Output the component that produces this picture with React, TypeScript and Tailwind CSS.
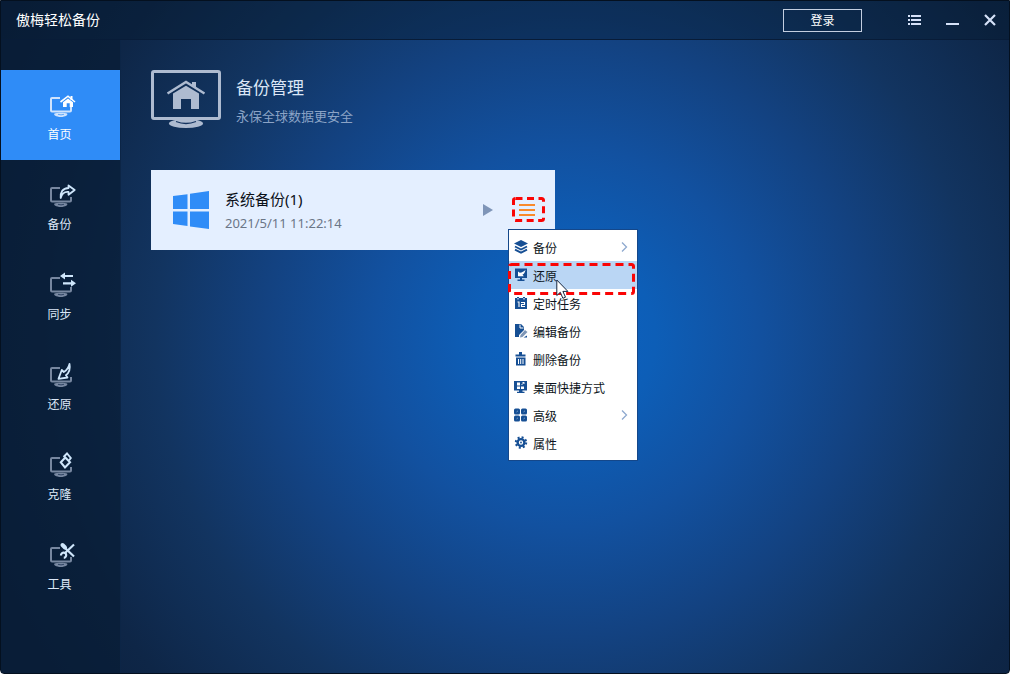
import React from 'react';

function Monitor({ active, children }: { active?: boolean; children: React.ReactNode }) {
  return (
    <svg width="26" height="26" viewBox="0 -2 26 26" fill="none" aria-hidden="true">
      <g className={active ? 'text-[#cfe3fd]' : 'text-[#7787a0]'}>
        <path
          d="M10 4H2a1 1 0 0 0-1 1v11.500a1 1 0 0 0 1 1h18a1 1 0 0 0 1-1V13"
          stroke="currentColor"
          strokeWidth="2"
        />
        <path d="M4.500 19.500c1.500-1 11-1 12.500 0c1.500 1.200-1.500 3.500-6.200 3.500s-7.800-2.300-6.300-3.500z" fill="currentColor" />
        <path d="M8 20.300q3 1.200 6 0" stroke={active ? '#2f8cf7' : '#10284a'} strokeWidth="0.700" />
      </g>
      {children}
    </svg>
  );
}

const navItems = [
  {
    label: '首页',
    glyph: (
      <>
        <path d="M10.500 8L18 2.200L25 8" stroke="#fff" strokeWidth="1.600" />
        <path d="M20.500 2h2v4h-2z" fill="#fff" />
        <path d="M13 13V8.200L18 4.500L23 8.200V13h-3.300V9.300h-3V13z" fill="#fff" />
      </>
    ),
  },
  {
    label: '备份',
    glyph: (
      <path
        d="M18.500 1.500L24.700 6L18.500 10.800V8C14.500 7.500 12 9.500 10.700 14C10.300 8 12.500 4.300 18.500 4z"
        stroke="#cfe6fb"
        strokeWidth="1.800"
        strokeLinejoin="round"
      />
    ),
  },
  {
    label: '同步',
    glyph: (
      <>
        <path d="M23 2H13M13 9.300h9" stroke="#cfe6fb" strokeWidth="2.200" />
        <path d="M10 2L15-1.500v7zM26 9.300L21 5.800v7z" fill="#cfe6fb" />
      </>
    ),
  },
  {
    label: '还原',
    glyph: (
      <path
        d="M19.500 0C18.500 4 16.500 6.500 13.800 8L11.800 6L8.500 14.800L17.500 13.500L15.900 11.200C19.500 8.500 20.500 5 19.500 0z"
        stroke="#cfe6fb"
        strokeWidth="1.800"
        strokeLinejoin="round"
      />
    ),
  },
  {
    label: '克隆',
    glyph: (
      <>
        <path d="M13.500 3L17-.5L20.800 4L19 6.500" stroke="#cfe6fb" strokeWidth="1.900" />
        <path d="M15.300 3.500L20 8.300L15 13.500L10.800 8.300z" stroke="#cfe6fb" strokeWidth="2.100" />
      </>
    ),
  },
  {
    label: '工具',
    glyph: (
      <>
        <path d="M12.500 1L15 3.500" stroke="#cfe6fb" strokeWidth="4" strokeLinecap="round" />
        <path d="M14 3L24 12.500" stroke="#cfe6fb" strokeWidth="2.200" />
        <path d="M24 .5L14.500 9.500" stroke="#cfe6fb" strokeWidth="2.200" />
        <path d="M11 11.500a2.600 2.600 0 1 1 2.800 2.300" stroke="#cfe6fb" strokeWidth="2.200" />
      </>
    ),
  },
];

const menuItems = [
  {
    label: '备份',
    submenu: true,
    icon: (
      <>
        <path d="M7 0L14 3.500L7 7L0 3.500z" fill="#164f94" />
        <path d="M1 6.500L7 9.500L13 6.500M1 9.700L7 12.700L13 9.700" stroke="#164f94" strokeWidth="1.900" />
      </>
    ),
  },
  {
    label: '还原',
    active: true,
    icon: (
      <>
        <path d="M1 .5h12v9.500H1zM6 10h2v1.500h2.500V13h-7v-1.500H6z" fill="#164f94" />
        <path d="M11.500 1.800C11 4.500 10 6 8.500 6.500L9.800 8.300H4L4 3.500L5.800 4.800C8 4.500 10 3.500 11.500 1.800z" fill="#fff" />
      </>
    ),
  },
  {
    label: '定时任务',
    icon: (
      <>
        <path d="M1 2h2V1h2v1h4V1h2v1h2v11H1z" fill="#164f94" />
        <path d="M3.500 6H5v5M7 6.500h3.500v2h-3v2H11M4 2v1.500M10 2v1.500" stroke="#fff" strokeWidth="1.100" />
      </>
    ),
  },
  {
    label: '编辑备份',
    icon: (
      <>
        <path d="M1 0h6l3 3v3L5 11v2H1z" fill="#164f94" />
        <path d="M6 .5V4h3.500" stroke="#fff" />
        <path d="M11 6l2.500 2L8.500 13L6 13.500L6.500 11z" fill="#7e96b6" />
        <path d="M9.500 13.500L13 11.500v2z" fill="#164f94" />
      </>
    ),
  },
  {
    label: '删除备份',
    icon: (
      <>
        <path d="M2 2.500h3V0h3v2.500h3.500v2h-10v-2zM2 5.500h9.500v8H2z" fill="#164f94" />
        <path d="M4.500 7v5M6.700 7v5M9 7v5" stroke="#fff" />
      </>
    ),
  },
  {
    label: '桌面快捷方式',
    icon: (
      <>
        <path d="M0 1h13v9.500H0zM5 10.500h3.500v1.300h2V13H3v-1.200h2z" fill="#164f94" />
        <path d="M3 2.500h3v3H3zM3 6.500h3v2.500H3zM7 6.500h3v2.500H7z" fill="#fff" />
        <path d="M7.500 5L10 2.500M8.500 2.500H10V4" stroke="#fff" strokeWidth="0.900" />
      </>
    ),
  },
  {
    label: '高级',
    submenu: true,
    icon: (
      <>
        <g fill="#164f94">
          <rect x="0" y="0.500" width="6" height="6" rx="1.500" />
          <rect x="7" y="0.500" width="6" height="6" rx="1.500" />
          <rect x="0" y="7.500" width="6" height="6" rx="1.500" />
          <rect x="7" y="7.500" width="6" height="6" rx="1.500" />
        </g>
        <path d="M2.500 4L4 2.800M9.500 4L11 2.800M2.500 11L4 9.800M9.500 11L11 9.800" stroke="#7fa0c8" strokeWidth="0.900" />
      </>
    ),
  },
  {
    label: '属性',
    icon: (
      <>
        <circle cx="7" cy="6.500" r="3.400" stroke="#164f94" strokeWidth="2.400" />
        <circle cx="7" cy="6.500" r="5.200" stroke="#164f94" strokeWidth="2" strokeDasharray="2 2.080" />
        <circle cx="7" cy="6.500" r="0.900" fill="#164f94" />
      </>
    ),
  },
];

function TitleBar() {
  return (
    <header className="flex h-[39px] items-center border-b border-[#081c38] bg-[#06182e]/40">
      <h1 className="grow pl-[15px] text-sm text-white">傲梅轻松备份</h1>
      <button className="mr-[33px] h-[23px] w-[79px] border border-[#c3cee0] pt-px text-xs leading-5 text-white">登录</button>
      <button className="flex h-full w-[38px] items-center justify-center" aria-label="Menu">
        <svg width="13" height="11" viewBox="0 0 13 11" fill="#d5e1f8">
          <path d="M0 0h2v2H0zM3 0h10v2H3zM0 4h2v2H0zM3 4h10v2H3zM0 8h2v2H0zM3 8h10v2H3z" />
        </svg>
      </button>
      <button className="flex h-full w-[38px] items-center justify-center" aria-label="Minimize">
        <svg width="13" height="11" viewBox="0 0 13 11" fill="#d5e1f8">
          <path d="M0 8h13v2H0z" />
        </svg>
      </button>
      <button className="flex h-full w-[38px] items-center justify-center" aria-label="Close">
        <svg width="12" height="12" viewBox="0 0 12 12" stroke="#d5e1f8" strokeWidth="2.200">
          <path d="M1 1l10 10M11 1L1 11" />
        </svg>
      </button>
    </header>
  );
}

function Sidebar() {
  return (
    <aside className="w-[120px] shrink-0 border-r border-[#0c2546] bg-[#081c34]/70 pt-[30px]">
      <nav>
        {navItems.map((item, i) => (
          <a
            key={item.label}
            href="#"
            className={
              i === 0
                ? 'flex h-[90px] flex-col items-center bg-[#2f8cf7] pt-[22px] pr-[2px] text-xs leading-5 text-white'
                : 'flex h-[90px] flex-col items-center pt-[22px] pr-[2px] text-xs leading-5 text-[#dce8f8]'
            }
          >
            <span className="mb-[7px] pl-[6px]">
              <Monitor active={i === 0}>{item.glyph}</Monitor>
            </span>
            {item.label}
          </a>
        ))}
      </nav>
    </aside>
  );
}

function ContextMenu() {
  return (
    <div className="absolute top-[59px] left-[357px] w-[130px] border border-[#14478a] bg-white py-[3px]">
      <ul>
        {menuItems.map((item) => (
          <li key={item.label}>
            <button
              className={
                item.active
                  ? 'flex h-7 w-full items-center bg-[#bad6f4] px-[5px] text-xs text-[#0c1420]'
                  : 'flex h-7 w-full items-center px-[5px] text-xs text-[#0c1420]'
              }
            >
              <svg className="mr-[5px]" width="14" height="14" viewBox="0 0 14 14" fill="none" aria-hidden="true">
                {item.icon}
              </svg>
              <span className="grow pt-[3px] text-left">{item.label}</span>
              {item.submenu && (
                <svg className="mr-1" width="7" height="10" viewBox="0 0 7 10" fill="none" stroke="#8ea9cf" strokeWidth="1.300">
                  <path d="M1 .5L5.500 5L1 9.500" />
                </svg>
              )}
            </button>
          </li>
        ))}
      </ul>
      {/* highlight around the restore entry */}
      <svg className="absolute top-[33px] -left-px" width="127" height="32" viewBox="0 0 127 32" fill="none" aria-hidden="true">
        <rect x="1.500" y="1.500" width="124" height="29" rx="2" stroke="#fa0505" strokeWidth="3" strokeDasharray="8 5" />
      </svg>
      <svg className="absolute top-[49px] left-[47px]" width="14" height="21" viewBox="0 0 14 21" aria-hidden="true">
        <path d="M.8 1v15.500l3.500-3.200l2.600 6l2.600-1.100l-2.600-5.800h5z" fill="#fff" stroke="#16263d" />
      </svg>
    </div>
  );
}

function BackupCard() {
  return (
    <section className="relative mt-[42px] w-full max-w-[404px]">
      <div className="flex h-20 items-center bg-[#e4efff] pr-[10px] pl-[22px]">
        <svg width="37" height="38" viewBox="0 0 37 38" fill="#2f8cf7" aria-hidden="true">
          <path d="M0 5L14.500 3.200V18H0zM17 2.800L36 0v18H17zM0 20.500h14.500V35L0 33zM17 20.500h19V38L17 35.400z" />
        </svg>
        <div className="ml-[15px] grow pt-[2px]">
          <h3 className="text-[15px] leading-6 text-[#0b1018]">系统备份(1)</h3>
          <p className="text-[13px] leading-6 text-[#6b7687]">2021/5/11 11:22:14</p>
        </div>
        <button className="mr-[19px]" aria-label="Run">
          <svg width="10" height="12" viewBox="0 0 10 12" fill="#7e95b8">
            <path d="M0 0l10 6l-10 6z" />
          </svg>
        </button>
        <button aria-label="Actions">
          <svg width="33" height="26" viewBox="0 0 33 26" fill="none">
            <rect x="1.500" y="1.500" width="30" height="22" rx="2" stroke="#fa0505" strokeWidth="3" strokeDasharray="7 4.500" />
            <path d="M7 8h16M7 13h16M7 18h16" stroke="#f98a2b" strokeWidth="2" />
          </svg>
        </button>
      </div>
      <ContextMenu />
    </section>
  );
}

export default function App() {
  return (
    <div className="min-h-screen bg-white font-['Noto_Sans','Noto_Sans_CJK_SC',sans-serif]">
      <div className="flex min-h-screen flex-col rounded-b-[4px] border border-[#04101f] bg-[radial-gradient(circle_at_56%_50%,#0c62c2_0px,#0d5eb7_90px,#1251a0_190px,#134281_300px,#123460_410px,#0e2647_530px,#0b1f3c_640px)]">
        <TitleBar />
        <div className="flex grow">
          <Sidebar />
          <main className="grow px-[30px] pt-[30px]">
            <div className="flex">
              <svg width="70" height="58" viewBox="0 0 70 58" fill="none" aria-hidden="true">
                <rect x="1.500" y="1.500" width="67" height="47" rx="1.500" stroke="#aebbd0" strokeWidth="3" />
                <path d="M16.500 23.500L35 12L53.500 23.500" stroke="#aebbd0" strokeWidth="2.400" />
                <path d="M41 12h4v6l-4-2.500z" fill="#aebbd0" />
                <path d="M22 39V23.500L35 15.800L48 23.500V39H40V29H30V39z" fill="#aebbd0" />
                <ellipse cx="35" cy="53.500" rx="17" ry="4.500" fill="#aebbd0" />
                <path d="M25 51.500q10 4 20 0" stroke="#14335f" strokeWidth="1.300" />
              </svg>
              <div className="ml-[15px] pt-1">
                <h2 className="text-[17px] leading-7 text-[#dbe6f6]">备份管理</h2>
                <p className="mt-[2px] text-[13px] leading-6 text-[#8ba3c6]">永保全球数据更安全</p>
              </div>
            </div>
            <BackupCard />
          </main>
        </div>
      </div>
    </div>
  );
}
